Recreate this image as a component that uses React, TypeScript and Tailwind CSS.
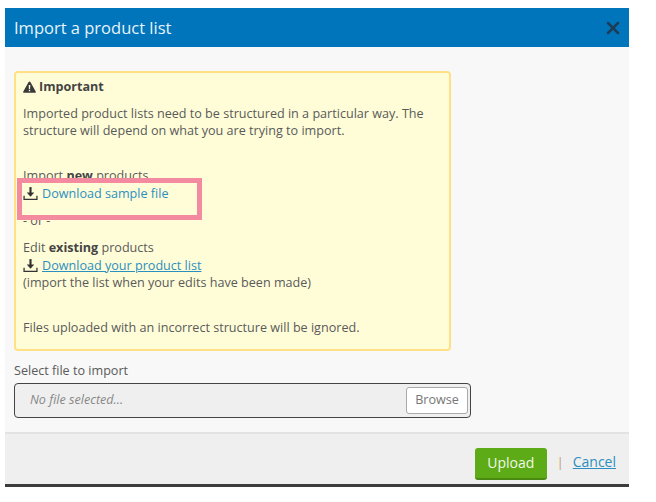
import { X } from 'lucide-react';

function DownloadIcon() {
  return (
    <svg viewBox="0 0 14 14" className="mr-1 h-[15px] w-[15px] shrink-0 text-[#333]" fill="none">
      <path d="M7 1v6.5" stroke="currentColor" strokeWidth="2" />
      <path d="M3.5 6h7L7 10z" fill="currentColor" />
      <path d="M1 9v3.5h12V9" stroke="currentColor" strokeWidth="1.2" />
    </svg>
  );
}

function WarningIcon() {
  return (
    <svg viewBox="0 0 13 12" className="mr-[3px] h-3 w-[13px] shrink-0 text-[#3a3a3a]">
      <path
        fillRule="evenodd"
        fill="currentColor"
        d="M6.5 0.5c.4 0 .7.2.9.5l5.3 9.4c.4.7-.1 1.4-.9 1.4H1.2c-.8 0-1.3-.7-.9-1.4L5.6 1c.2-.3.5-.5.9-.5zM5.7 4l.2 3.9h1.2L7.3 4zM5.8 8.8v1.4h1.4V8.8z"
      />
    </svg>
  );
}

export default function App() {
  return (
    <div className="h-[502px] w-[656px] bg-white pl-[5px] pt-2 font-['Open_Sans',sans-serif] text-[12.6px] leading-[17.5px] text-[#5a5a5a]">
      <div className="w-[624px]">
        <div className="flex h-[39px] items-center justify-between bg-[#0075bb] pl-[9px] pr-[6px]">
          <h1 className="text-[16.5px] text-[#e8f3fa]">Import a product list</h1>
          <X size={20} strokeWidth={3} className="text-[#1d3c55]" />
        </div>

        <div className="h-[385px] bg-[#f8f8f8] px-[9px] pt-6">
          <div className="relative h-[280px] w-[437px] rounded-[4px] border-2 border-[#ffe084] bg-[#fffdd8] px-[7px] pt-[5px]">
            <p className="flex items-center font-bold text-[#444]">
              <WarningIcon />
              Important
            </p>
            <p className="mt-[9px]">
              Imported product lists need to be structured in a particular way. The
              <br />
              structure will depend on what you are trying to import.
            </p>
            <p className="mt-[27px]">
              Import <b className="text-[#444]">new</b> products
            </p>
            <a className="mt-[1px] flex items-center text-[#2b8fc0]" href="#sample">
              <DownloadIcon />
              Download sample file
            </a>
            <p className="mt-[9px]">- or -</p>
            <p className="mt-[10px]">
              Edit <b className="text-[#444]">existing</b> products
            </p>
            <a className="flex items-center text-[#2b8fc0]" href="#list">
              <DownloadIcon />
              <span className="underline">Download your product list</span>
            </a>
            <p>(import the list when your edits have been made)</p>
            <p className="mt-[27px]">Files uploaded with an incorrect structure will be ignored.</p>

            <div className="absolute left-px top-[105px] h-[42px] w-[185px] border-[5px] border-[#f48aa0]" />
          </div>

          <label className="mt-[11px] block">Select file to import</label>
          <div className="mt-[3px] flex h-[35px] w-[457px] items-center justify-between rounded-[4px] border border-[#444] bg-[#efefef] pl-[15px] pr-[2px]">
            <span className="italic text-[#888]">No file selected...</span>
            <button className="h-[27px] w-[62px] rounded-[3px] border border-[#aaa] bg-white text-[#777]">Browse</button>
          </div>
        </div>

        <div className="flex h-[52px] items-start justify-end border-t-2 border-[#e2e2e2] bg-[#efefef] pr-[13px] pt-[14px]">
          <button className="h-[32px] w-[72px] rounded-[3px] border-b-2 border-[#4b8a12] bg-[#5dab16] text-[14px] text-[#f2f8e8]">
            Upload
          </button>
          <span className="ml-[10px] mr-[9px] mt-[6px] text-[#c09a70]">|</span>
          <a className="mt-[5px] text-[14px] text-[#2b8fc0] underline" href="#cancel">
            Cancel
          </a>
        </div>
        <div className="h-[3px] bg-[#3c3c3c]" />
      </div>
    </div>
  );
}
